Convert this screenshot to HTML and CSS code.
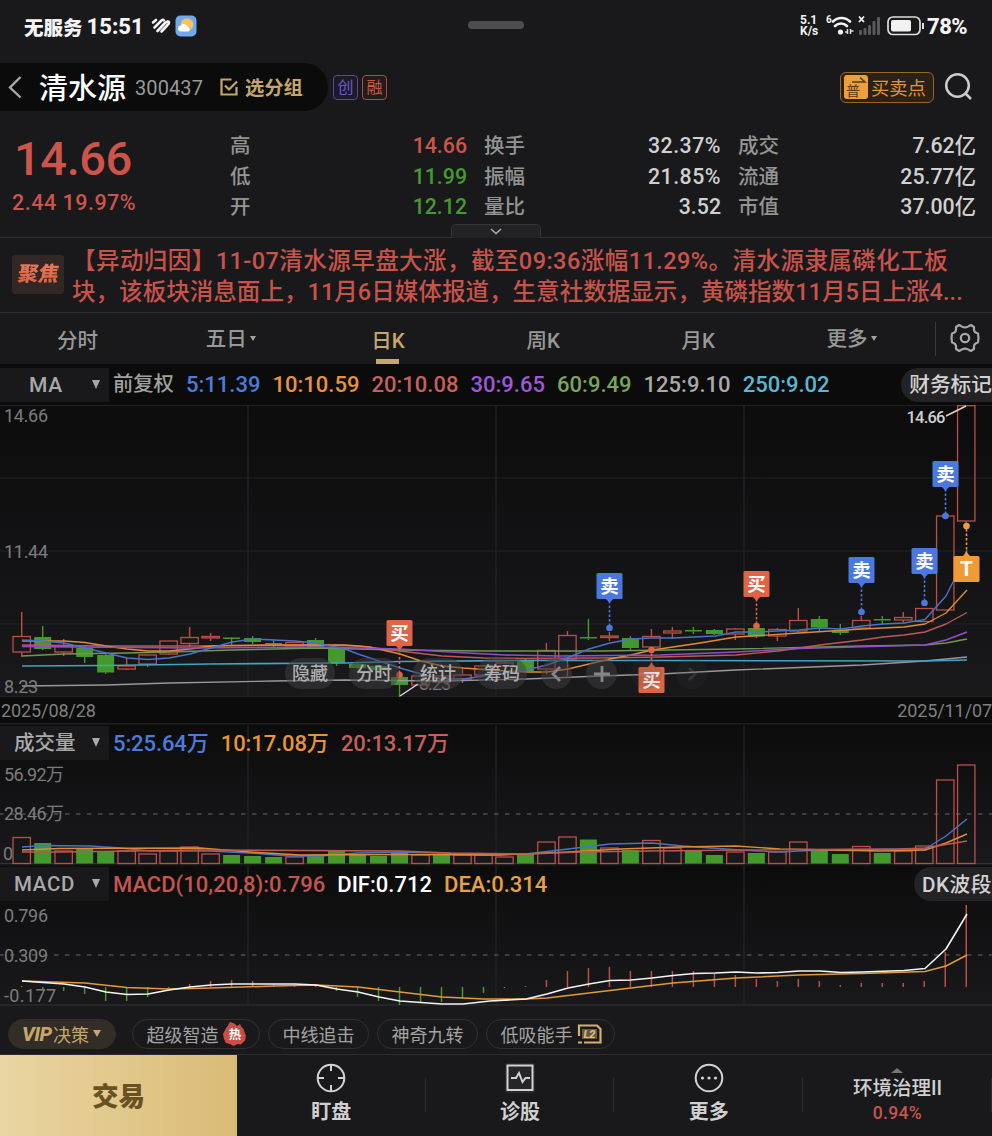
FILE: index.html
```html
<!DOCTYPE html>
<html lang="zh-CN">
<head>
<meta charset="utf-8">
<title>清水源 300437</title>
<link rel="stylesheet" href="styles.css">
</head>
<body>
<div class="app">
  <div class="status">
    <span class="carrier">无服务</span><span class="clock">15:51</span>
    <svg class="stripes" width="20" height="18" viewBox="0 0 20 18" fill="none" stroke="#f4f4f4" stroke-width="2.600" stroke-linecap="round" stroke-linejoin="round"><path d="M2 5.500L5 3"/><path d="M3.500 10.500L10.500 3.500Q12 2 13 3.500"/><path d="M6.500 14L13.500 6.500Q17.500 3 18 5.500Q18 7 16.500 8L10.500 14.500"/></svg>
    <svg class="weather" width="22" height="22" viewBox="0 0 22 22"><rect x=".5" y=".5" width="21" height="21" rx="5" fill="#70a9ee"/><circle cx="12" cy="9.500" r="6.300" fill="#f8c262"/><path d="M6 16.500a3 3 0 0 1 0-6 3.700 3.700 0 0 1 6.500 1.500 2.500 2.500 0 0 1 1 4.500z" fill="#fff"/></svg>
    <span class="notch"></span>
    <span class="speed"><b>5.1</b><b>K/s</b></span>
    <svg class="net" width="56" height="24" viewBox="0 0 56 24"><text x="0" y="9" class="tiny">6</text><g fill="none" stroke="#f4f4f4" stroke-width="2.600" stroke-linecap="round"><path d="M7 7.500a12 12 0 0 1 17 0"/><path d="M9 12a8.500 8.500 0 0 1 12 0"/></g><circle cx="14.500" cy="18" r="2.600" fill="#f4f4f4"/><path d="M21.500 15v5M24.500 15v5M19 18h2.500M24.500 17h3" stroke="#ddd" stroke-width="1.500"/><path d="M33 2.500l5 5.500M38 2.500l-5 5.500" stroke="#f4f4f4" stroke-width="1.800"/><g fill="#59595b"><rect x="33" y="16" width="3" height="5" rx="1"/><rect x="37.500" y="14" width="3" height="7" rx="1"/><rect x="42" y="11" width="3" height="10" rx="1"/><rect x="46.500" y="7" width="3" height="14" rx="1"/><rect x="51" y="3" width="3" height="18" rx="1"/></g></svg>
    <svg class="battery" width="38" height="20" viewBox="0 0 38 20"><rect x="1" y="1" width="32" height="17.500" rx="5" fill="none" stroke="#dedede" stroke-width="1.700"/><rect x="4" y="4" width="20" height="11.500" rx="2" fill="#f2f2f2"/><path d="M36 7v6" stroke="#dedede" stroke-width="2"/></svg>
    <span class="pct">78%</span>
  </div>

  <div class="title">
    <div class="pill">
      <svg width="14" height="24" viewBox="0 0 14 24" fill="none" stroke="#aaa" stroke-width="2.300"><path d="M12.500 2L2 12.500l10.500 10"/></svg>
      <span class="name">清水源</span><span class="code">300437</span>
      <svg class="check" width="20" height="20" viewBox="0 0 20 20" fill="none" stroke="#c5a66b" stroke-width="2.200"><path d="M12.500 2.500H2.500v15h15V10"/><path d="M6 8.500l4 4L18 4.500"/></svg>
      <span class="group">选分组</span>
    </div>
    <span class="tag violet">创</span><span class="tag rust">融</span>
    <div class="points"><span class="pu">普<svg width="16" height="8" viewBox="0 0 16 8" fill="none" stroke="#5b3a12" stroke-width="1.600"><path d="M1 6h13L9 1.500"/></svg></span><span>买卖点</span></div>
    <svg class="search" width="30" height="30" viewBox="0 0 30 30" fill="none" stroke="#ccc" stroke-width="2.500"><circle cx="13.500" cy="13.500" r="11.300"/><path d="M21.500 21.500l5.500 5.500"/></svg>
  </div>

  <div class="quote">
    <div class="price"><div class="last">14.66</div><div class="chg">2.44 19.97%</div></div>
    <dl class="stats">
      <dt>高</dt><dd class="r">14.66</dd><dt>换手</dt><dd class="w">32.37%</dd><dt>成交</dt><dd>7.62亿</dd>
      <dt>低</dt><dd class="g">11.99</dd><dt>振幅</dt><dd class="w">21.85%</dd><dt>流通</dt><dd>25.77亿</dd>
      <dt>开</dt><dd class="g">12.12</dd><dt>量比</dt><dd>3.52</dd><dt>市值</dt><dd>37.00亿</dd>
    </dl>
    <div class="expand"><svg width="12" height="7" viewBox="0 0 12 7" fill="none" stroke="#aaa" stroke-width="1.500"><path d="M1 1l5 4.500L11 1"/></svg></div>
  </div>

  <div class="news">
    <span class="focus"><i>聚焦</i></span>
    <div class="lines"><div class="l1">【异动归因】11-07清水源早盘大涨，截至09:36涨幅11.29%。清水源隶属磷化工板</div><div class="l2">块，该板块消息面上，11月6日媒体报道，生意社数据显示，黄磷指数11月5日上涨4...</div></div>
  </div>

  <div class="tabs">
    <span>分时</span><span class="up">五日<i></i></span><span class="on">日K</span><span>周K</span><span>月K</span><span class="up">更多<i></i></span>
    <div class="gear"><svg width="30" height="30" viewBox="0 0 30 30" fill="none" stroke="#a8a8a8" stroke-width="2.200" stroke-linejoin="round"><path d="M9.200 2L12 3.600Q15 5.200 18 3.600L20.800 2L24 4V6.500Q24 9.500 28 10.500L28.500 15L28 19.500Q24 20.500 24 23.500V26L20.800 28L18 26.400Q15 24.800 12 26.400L9.200 28L6 26V23.500Q6 20.500 2 19.500L1.500 15L2 10.500Q6 9.500 6 6.500V4Z"/><circle cx="15" cy="15" r="4.200"/></svg></div>
  </div>

  <div class="legend ma">
    <span class="pick"><em>MA</em><i></i></span>
    <span class="fq">前复权</span><span class="c-blue">5:11.39</span><span class="c-orange">10:10.59</span><span class="c-rose">20:10.08</span><span class="c-purple">30:9.65</span><span class="c-lime">60:9.49</span><span class="c-gray">125:9.10</span><span class="c-cyan">250:9.02</span>
    <span class="side">财务标记</span>
  </div>

  <div class="kline">
    <svg id="kline" width="992" height="292" viewBox="0 405 992 292"></svg>
    <div class="tools"><span>隐藏</span><span>分时</span><span>统计</span><span>筹码</span>
      <b><svg width="16" height="18" viewBox="0 0 16 18"><path d="M11 2L4 9l7 7"/></svg></b>
      <b><svg width="18" height="18" viewBox="0 0 18 18"><path d="M1 9h16M9 1v16"/></svg></b>
      <b class="faint"><svg width="18" height="18" viewBox="0 0 18 18"><path d="M1 9h16"/></svg></b>
      <b class="faint"><svg width="16" height="18" viewBox="0 0 16 18"><path d="M5 3l6 6-6 6"/></svg></b>
    </div>
  </div>
  <div class="dates"><span>2025/08/28</span><span>2025/11/07</span></div>

  <div class="panel vol">
    <svg id="volume" width="992" height="140" viewBox="0 725 992 140"></svg>
    <div class="legend"><span class="pick"><em>成交量</em><i></i></span><span class="c-blue">5:25.64万</span><span class="c-orange">10:17.08万</span><span class="c-rose">20:13.17万</span></div>
  </div>
  <div class="panel osc">
    <svg id="macd" width="992" height="140" viewBox="0 866 992 140"></svg>
    <div class="legend"><span class="pick"><em>MACD</em><i></i></span><span class="c-red">MACD(10,20,8):0.796</span><span class="c-white">DIF:0.712</span><span class="c-amber">DEA:0.314</span><span class="side dk">DK波段</span></div>
  </div>

  <div class="chips">
    <span class="chip vip"><em>VIP</em>决策<i></i></span>
    <span class="chip hot">超级智造<svg width="24" height="26" viewBox="0 0 24 26"><path d="M7 1q5 1 7 4l3-2q1 3 3.500 5l1 3.500 1.500 3-1 5-4 4-3.500-.500-4 2-3.500-2-4-1-2-4L0 13l2-4z" fill="#cb4d45"/><text x="12" y="18" class="badge">热</text></svg></span>
    <span class="chip plain">中线追击</span><span class="chip plain">神奇九转</span>
    <span class="chip low">低吸能手<svg width="25" height="20" viewBox="0 0 25 20"><path d="M2 12V1.500h18l3.500 3.500v13.500H7M1 18.500h4" fill="none" stroke="#d3b06c" stroke-width="2.200"/><rect x="5" y="5" width="15" height="10" fill="#655a47"/><text x="12.500" y="14" class="lv">L2</text></svg></span>
  </div>

  <div class="nav">
    <div class="trade">交易</div>
    <div class="item"><svg width="30" height="30" viewBox="0 0 30 30" fill="none" stroke="#d2d2d2" stroke-width="2"><circle cx="15" cy="15" r="13.300"/><path d="M15 2v6M15 22v6M2 15h6M22 15h6"/></svg><span>盯盘</span></div>
    <div class="item"><svg width="30" height="30" viewBox="0 0 30 30" fill="none" stroke="#d2d2d2" stroke-width="2"><rect width="30" height="30" fill="#242628" stroke="none"/><rect x="2.500" y="2.500" width="25" height="24.500"/><path d="M6 15h5l3-5 3.500 9 3-4H25"/></svg><span>诊股</span></div>
    <div class="item"><svg width="30" height="30" viewBox="0 0 30 30" fill="none" stroke="#d2d2d2" stroke-width="2"><circle cx="15" cy="15" r="13.300"/><g fill="#d2d2d2" stroke="none"><circle cx="8.500" cy="15" r="1.600"/><circle cx="15" cy="15" r="1.600"/><circle cx="21.500" cy="15" r="1.600"/></g></svg><span>更多</span></div>
    <div class="item sector"><i></i><strong>环境治理II</strong><small>0.94%</small></div>
  </div>
</div>
<script src="chart.js"></script>
</body>
</html>
```

FILE: styles.css
```css
* { box-sizing: border-box; }
body { margin: 0; background: #19191b; color: #d0d0d0; font-family: Roboto, "Noto Sans CJK SC", sans-serif; }
i, em { font-style: normal; }
svg { display: block; flex: none; }
.app { width: 992px; height: 1136px; overflow: hidden; display: flex; flex-direction: column; white-space: nowrap; background: #19191b; }
.app > div { flex: none; }

.status { height: 63px; display: flex; align-items: center; padding: 0 24px 11px; color: #f4f4f4; position: relative; }
.carrier { font-size: 19.5px; font-weight: 900; }
.clock { font-size: 22px; font-weight: 800; margin-left: 4px; letter-spacing: 0; width: 60px; }
.stripes { margin-left: 4px; }
.weather { margin-left: 4px; }
.notch { position: absolute; left: 468px; top: 21px; width: 56px; height: 8px; border-radius: 4px; background: #4d4d4f; }
.speed { margin-left: auto; width: 22px; display: flex; flex-direction: column; font-size: 12px; line-height: 11px; }
.net { margin-left: 4px; }
.tiny { font: 700 10px Roboto, sans-serif; fill: #f4f4f4; }
.battery { margin-left: 5px; }
.pct { font-size: 22px; font-weight: 800; letter-spacing: -.5px; margin-left: 2px; width: 41px; }

.title { height: 48px; display: flex; align-items: center; }
.pill { width: 328px; height: 48px; background: #0b0b0b; border-radius: 0 24px 24px 0; display: flex; align-items: center; padding-left: 8px; }
.name { font-size: 29px; font-weight: 500; color: #fff; margin-left: 17px; width: 96px; line-height: 40px; padding-top: 3px; }
.code { font-size: 20px; color: #999; width: 84px; letter-spacing: .1px; padding-top: 1px; }
.group { font-size: 19.300px; font-weight: 700; color: #c5a66b; margin-left: 6px; }
.tag { width: 25px; height: 25px; margin-left: 5px; border: 1px solid; border-radius: 4px; font-size: 16px; line-height: 24px; text-align: center; }
.tag + .tag { margin-left: 4px; }
.violet { color: #7059c2; border-color: #5a4a9c; background: #1c1a26; }
.rust { color: #c95a42; border-color: #a84f3c; background: #241a19; }
.points { margin-left: auto; width: 94px; height: 31px; border: 1px solid #9a6425; border-radius: 6px; background: #2b2217; display: flex; align-items: center; gap: 3px; padding-left: 3px; font-size: 18.300px; color: #e0933a; }
.pu { width: 24px; height: 24px; border-radius: 3px; background: #ef9f3a; color: #5b3a12; font-size: 14px; line-height: 32px; padding-left: 2px; position: relative; }
.pu svg { position: absolute; left: 7px; top: 1px; }
.search { margin: 0 18px 0 10px; }

.quote { height: 127px; display: flex; border-bottom: 1px solid #303032; position: relative; padding-top: 20px; }
.price { width: 230px; padding-left: 12px; color: #cd544b; }
.last { font-size: 47px; font-weight: 500; line-height: 56px; padding-left: 2px; letter-spacing: -.4px; }
.chg { font-size: 21.500px; font-weight: 500; line-height: 31px; letter-spacing: .5px; }
.stats { margin: 0; width: 746px; display: grid; grid-template-columns: 100px 137px 117px 137px 117px 138px; grid-auto-rows: 30.500px; font-size: 21.300px; line-height: 30.500px; }
.stats dt { font-size: 20.500px; font-weight: 500; color: #949494; padding-left: 0; line-height: 31.500px; }
.stats dt:nth-of-type(3n+2), .stats dt:nth-of-type(3n) { padding-left: 17px; }
.stats dd { margin: 0; text-align: right; font-weight: 500; letter-spacing: 0; }
.stats .w { letter-spacing: .5px; }
.stats .r { color: #cd544b; }
.stats .g { color: #459a2d; }
.expand { position: absolute; left: 451px; top: 113px; width: 90px; height: 14px; border: 1px solid #343436; border-bottom: 0; border-radius: 5px 5px 0 0; background: #222224; display: flex; justify-content: center; padding-top: 3px; }

.news { height: 75px; border-bottom: 1px solid #2c2c2e; display: flex; color: #c8534b; }
.focus { margin: 17px 8px 0 12px; width: 52px; height: 39px; border-radius: 3px; background: #322725; color: #e26447; font-size: 20.500px; font-weight: 900; line-height: 38px; text-align: center; }
.focus i { display: inline-block; transform: skewX(-10deg); background: linear-gradient(#e9866c, #df5432); background-clip: text; color: transparent; }
.lines { padding-top: 8px; font-size: 23.500px; font-weight: 500; line-height: 31px; }
.l1 { letter-spacing: .45px; }
.l2 { letter-spacing: .05px; }

.tabs { height: 51px; display: flex; font-size: 20.500px; font-weight: 500; color: #989898; }
.tabs > span { width: 155.200px; text-align: center; line-height: 57px; position: relative; }
.tabs .up { line-height: 53px; left: -2px; }
.tabs i { display: inline-block; border: 3.500px solid transparent; border-top: 5px solid #a0a0a0; border-bottom: 0; margin-left: 3px; vertical-align: 5px; }
.tabs .on { color: #c8a76a; font-weight: 500; }
.tabs .on::after { content: ""; position: absolute; left: 66px; bottom: 0; width: 23px; height: 5px; background: #c8a76a; }
.gear { margin: 9px 0 0 4px; height: 34px; border-left: 1px solid #3a3a3c; padding: 1px 0 0 14px; }

.legend { height: 35px; display: flex; align-items: center; font-size: 22px; font-weight: 500; }
.ma { height: 41px; background: #0b0b0b; }
.legend > span { margin-right: 12.100px; line-height: 35px; }
.legend .pick { width: 109px; height: 34px; background: #19191b; color: #a9a9a9; display: flex; align-items: center; justify-content: space-between; padding: 0 9px 0 14px; margin-right: 4px; }
.pick em { font-size: 20.500px; letter-spacing: .7px; }
.vol .pick em { letter-spacing: 0; }
.panel .pick em { padding-top: 2px; }
.ma .pick em { padding-left: 15px; font-size: 21px; padding-top: 1px; }
.pick i { border: 4.500px solid transparent; border-top: 9px solid #a9a9a9; border-bottom: 0; }
.legend .fq { color: #a0a0a0; font-size: 20.300px; font-weight: 500; }
.vol .legend > span:not(.pick), .osc .legend > span:not(.pick) { padding-top: 1px; }
.vol .c-blue, .vol .c-orange, .vol .c-rose { letter-spacing: -.1px; }
.legend .side { margin: 0 0 0 auto; height: 34px; background: #232325; border-radius: 17px 0 0 17px; padding-left: 8px; font-size: 20.700px; font-weight: 500; color: #d2d2d2; }
.legend .dk { letter-spacing: .5px; }
.c-blue { color: #4c7cdb; } .c-orange { color: #e8933c; } .c-rose { color: #c5605d; }
.c-purple { color: #9b59d9; } .c-lime { color: #7aa55a; } .c-gray { color: #a9a9a9; }
.c-cyan { color: #5cb6d4; } .c-red { color: #c5554f; } .c-white { color: #fff; } .c-amber { color: #e8a040; }

.kline { height: 292px; position: relative; background: linear-gradient(#0c0c0d, #19191b); }
.tools { position: absolute; left: 285px; top: 253px; display: flex; gap: 14px; }
.tools span { width: 50px; height: 31px; border-radius: 16px; background: rgba(64,64,66,.5); color: #b0b0b0; font-size: 18px; font-weight: 500; line-height: 32px; text-align: center; }
.tools b { width: 31px; height: 31px; border-radius: 50%; background: rgba(64,64,66,.5); display: flex; align-items: center; justify-content: center; }
.tools path { fill: none; stroke: #868688; stroke-width: 2.800; }
.tools .faint { background: rgba(60,60,62,.4); opacity: .4; }
.tools .faint:last-child path { stroke: #5c5c5e; }
.dates { height: 27px; background: #0b0b0b; display: flex; justify-content: space-between; align-items: center; padding: 0 0 0 1px; font-size: 18px; letter-spacing: -.1px; color: #808080; border-bottom: 1px solid #202022; }

.panel { display: grid; background: linear-gradient(#0c0c0d, #19191b); }
.panel > * { grid-area: 1 / 1; }
.vol { height: 141px; border-top: 1px solid #141416; }
.osc { height: 141px; border-top: 1px solid #141416; }

#kline text, #volume text, #macd text { font: 18px Roboto, "Noto Sans CJK SC", sans-serif; fill: #7c7c7e; }
#kline .flag { font: 700 18.500px "Noto Sans CJK SC", sans-serif; fill: #fff; text-anchor: middle; }
#kline .t { font: 700 20px Inter, sans-serif; fill: #fff; text-anchor: middle; }
#kline .high { font-size: 16.500px; font-weight: 500; fill: #d0d0d0; }

.chips { height: 49px; border-bottom: 1px solid #2c2c2e; display: flex; align-items: center; gap: 8px; padding: 7px 0 0 8px; font-size: 18px; color: #a3a3a3; }
.chip { height: 30px; border: 1px solid #303032; border-radius: 15px; display: flex; align-items: center; padding-left: 13.500px; }
.vip { width: 108px; background: #322d27; border-color: #322d27; color: #c5a66b; margin-right: 8px; padding-left: 13px; }
.vip em { font-style: italic; font-weight: 800; font-size: 20px; width: 31px; letter-spacing: -.5px; }
.vip i { border: 4px solid transparent; border-top: 7px solid #c5a66b; border-bottom: 0; margin-left: 4px; }
.hot { width: 128px; } .hot svg { margin-left: 4px; }
.plain { width: 101px; }
.low { width: 129px; } .low svg { margin-left: 4px; }
.badge { font: 700 12.500px "Noto Sans CJK SC", sans-serif; fill: #fff; text-anchor: middle; }
.lv { font: italic 800 11px Roboto, sans-serif; fill: #e1bd74; text-anchor: middle; }

.nav { height: 81px; display: flex; }
.trade { width: 237px; background: linear-gradient(90deg, #e9d5a2, #dabb76); color: #695221; font-size: 26.500px; font-weight: 900; text-align: center; line-height: 83px; }
.item { width: 188.700px; display: flex; flex-direction: column; align-items: center; padding-top: 8px; font-size: 20px; font-weight: 700; position: relative; }
.item span { line-height: 30px; margin-top: 4px; }
.item::after { content: ""; position: absolute; right: 0; top: 23px; width: 1px; height: 34px; background: #2d2d2f; }
.item.sector { padding-top: 13px; }
.sector i { border: 6px solid transparent; border-bottom: 5px solid #777; border-top: 0; }
.sector strong { font-size: 19.500px; font-weight: 500; line-height: 32px; }
.sector small { font-size: 17.500px; font-weight: 500; line-height: 16px; color: #c5554f; letter-spacing: .3px; }
```

FILE: chart.js
```js
const RED = '#bb4f48', GREEN = '#43992b', GRID = '#222224';
const cx = i => 21.7 + 20.99 * i;
const line = (pts, color, w = 1.4) => {
  const p = pts.split(' ').map(s => s.split(',').map(Number));
  let d = `M${p[0]}`;
  for (let i = 1; i < p.length; i++) d += `L${p[i]}`;
  return `<path d="${d}" fill="none" stroke="${color}" stroke-width="${w}" stroke-linejoin="round"/>`;
};
const seg = (x1, y1, x2, y2, color, extra = '') =>
  `<line x1="${x1}" y1="${y1}" x2="${x2}" y2="${y2}" stroke="${color}" ${extra}/>`;
const cols = (a, b) => [248, 496, 744].map(x => seg(x, a, x, b, GRID, 'stroke-width="1.500"')).join('');
const label = (x, y, s, w) => `<text x="${x}" y="${y}" textLength="${w}">${s}</text>`;
const box = (i, up, a, b) => up
  ? `<rect x="${cx(i) - 8.700}" y="${a}" width="17.400" height="${Math.max(b - a, 1)}" fill="none" stroke="${RED}" stroke-width="1.300"/>`
  : `<rect x="${cx(i) - 8.500}" y="${a}" width="17" height="${Math.max(b - a, 1.500)}" fill="${GREEN}"/>`;

// up flag, high, body top, body bottom, low
const candles = [
  [1,612,636.5,652,657],[0,626,637,649,650],[1,639,646.5,652,656],[0,646,648,657,663],[0,653,655,672.5,674],
  [1,658,666,669,670],[1,655,655,664,667],[1,641,641,654,655],[1,627,637.5,643.5,647],[1,633,636.5,638,641],
  [0,637,637.5,639,646],[0,636,638,642,644],[0,639,643,644,648],[1,642,642.5,647,647],[0,638,640,647,648],
  [0,647,647,663,666],[0,662,664,668,669],[0,665,666,670,671],[0,673,677,685,697],[1,674,676,685,686],
  [1,675,676,682,683],[1,667,675,679,683],[1,665,666,675,676],[1,662,663,666,667],[0,659,660,671,672],
  [1,643,650.5,669,674],[1,631,635.5,659,676],[0,619,637,638.5,640],[1,632,636,637.5,641],[0,636,638,648,650],
  [1,629,636.5,647,653],[1,627,631,633,639],[0,627,630,631.5,634],[0,629,630,634,635],[1,628,629,634,640],
  [0,627,628,636.5,638],[1,628,629.5,636,641],[1,608,620.5,631,632],[0,616,619,627.5,631],[0,624,630,633,635],
  [1,616,620.5,628,629],[0,616,619,620.5,624],[1,612,617.5,620,623],[1,608,608.5,621.5,622],[1,516,516,610,610],[1,405,405.7,521,526]
];
let k = [405.5, 478, 551, 624, 696.5].map(y => seg(0, y, 992, y, GRID)).join('') + cols(405, 697);
candles.forEach(([up, h, a, b, l], i) => {
  const c = up ? RED : GREEN;
  k += seg(cx(i), h, cx(i), a, c, 'stroke-width="1.400"') + seg(cx(i), b, cx(i), l, c, 'stroke-width="1.400"') + box(i, up, a, b);
});
k += line('22,686 106,685 169,683 274,681 345,680 442,681 526,679 600,676 660,674 736,670 862,665 925,661 946,659 967,657', '#989898');
k += line('22,666 106,665.5 210,664 345,663 400,661.5 526,660.5 660,660.5 925,661 967,660', '#42a4c2', 1.6);
k += line('22,656 64,654 127,653 169,652 232,650 316,648 400,650 484,651 600,651 736,649 862,646 925,645 946,643 967,639', '#6e9851');
k += line('22,645 106,646 190,646 316,645 358,646 400,651 442,656 484,658 526,658.5 600,658 660,657 736,655 778,651 820,645 862,640 883,637 904,635 925,632 946,624 967,612.5', '#bc5954');
k += line('22,641 64,641 85,642.5 106,646 127,649 148,651 169,651 190,649 211,646 232,645.5 274,645 345,645 370,647 400,654 421,661 442,666 463,668 505,671 526,672 547,672 568,669 589,664 610,659 631,655 652,650 673,647 700,643 736,637 799,633 862,629 904,627 925,624 946,613 967,590', '#df8b35');
k += line('22,646.5 190,648 316,647 400,649 450,652 505,655 560,656 660,655 736,652 799,648.5 925,645 946,640 967,632', '#904fc8', 1.6);
k += line('22,640 43,641 64,643 85,648 106,653 127,658 148,659.5 169,658 190,654 211,648 232,642 253,639 274,640 295,641 316,643 345,649 358,654 379,661 400,668 421,674 442,679 463,679 484,676 505,673 526,670 547,665 568,657.5 589,649 610,643 631,639 652,638 673,638 715,636 736,632 757,632 799,630 820,628 841,629 862,626 883,624 904,623 925,619.5 946,596 954,580 967,550', '#4873c9');
k += label(4, 422, '14.66', 44) + label(4, 558, '11.44', 44) + label(4, 693, '8.23', 34) + label(419, 690, '8.23', 32);
k += seg(400, 696, 418, 684, '#d8d8d8', 'stroke-width="1.500"') + seg(946, 416, 966, 406, '#d8d8d8', 'stroke-width="1.500"');
k += '<text class="high" x="906.500" y="423" textLength="39">14.66</text>';
[[609.5,586,'卖','#4a78df',628],[756.5,584,'买','#dc6546',626],[861.5,570,'卖','#4a78df',612],[924.5,561,'卖','#4a78df',603],
 [945.5,474,'卖','#4a78df',516],[966.5,569,'T','#ef9c37',526],[399.5,633,'买','#dc6546',675],[651.5,680,'买','#dc6546',650]
].forEach(([x, y, s, c, dot]) => {
  const d = dot > y ? 1 : -1;
  k += seg(x, y + 15 * d, x, dot, c, 'stroke-width="1.600" stroke-dasharray="2.500 2"')
    + `<circle cx="${x}" cy="${dot}" r="3.300" fill="${c}"/><rect x="${x - 13}" y="${y - 13}" width="26" height="26" rx="1.500" fill="${c}"/>`
    + `<path d="M${x - 4} ${y + 12.500 * d}h8l-4 ${4.500 * d}z" fill="${c}"/><text class="${s === 'T' ? 't' : 'flag'}" x="${x}" y="${y + 7}">${s}</text>`;
});
document.getElementById('kline').innerHTML = k;

const volumes = [
  [1,837.5],[0,843],[1,851],[0,849],[0,852],[1,851],[1,854],[1,851],[1,847],[1,854],[0,855],[0,856],[0,857],[1,857],[0,855],[0,851],
  [0,854],[0,856],[0,852],[1,855],[0,855],[1,855],[1,855],[1,857],[0,854],[1,842],[1,837],[0,839.5],[1,848],[0,850],[1,840.5],
  [1,848],[0,851],[0,855],[1,852],[0,853],[1,852],[1,842],[0,850],[0,854],[1,846.5],[0,853],[1,851],[1,846],[1,780],[1,765]
];
const dash = y => seg(-1, y, 992, y, '#4c4c4e', 'stroke-width="1.500" stroke-dasharray="4.500 6.500"');
let v = cols(725, 864) + dash(814) + seg(0, 863.5, 992, 863.5, '#333335');
volumes.forEach(([up, y], i) => { v += box(i, up, y, 863.5); });
v += line('22,847 43,845.5 90,846 120,848 150,851 211,851 250,853 290,856 320,856 358,853 400,852 442,853 484,855 526,854 568,849 610,844 652,843 683,846 740,850 778,852 820,850 904,849 925,849 946,836 967,819', '#4873c9');
v += line('22,850 60,848.5 200,848 250,852 300,855 400,854.5 500,855 568,852 620,849 680,847 736,846 780,849 883,851 925,850 946,843 967,834', '#df8b35');
v += line('22,852 60,852 200,850 400,851 450,853 530,854 580,852 650,851 800,849.5 900,849 925,848 967,841', '#bc5954');
v += label(4, 781, '56.92万', 60) + label(4, 820, '28.46万', 60) + '<text x="3" y="860">0</text>';
document.getElementById('volume').innerHTML = v;

const bars = [986,989,991,994,1001,1001,997,988,984,981,980,981,984,985,986,991,997,1001,1005,1002,1002,998,993,988,986,
  980,971,968,967,971,971,971,971,973,975,979,981,979,981,985,983,983,983,981,952,905];
let m = cols(866, 1005) + dash(955) + seg(0, 1005, 992, 1005, '#333335');
bars.forEach((y, i) => { m += seg(cx(i), 987, cx(i), y, y < 987 ? RED : GREEN, 'stroke-width="1.500"'); });
m += line('22,981 85,983 127,987.5 169,989 211,988 274,986 316,985 358,987 400,992 442,997 484,999 526,999 547,998 589,993 631,988 673,983 736,978 799,975 862,973.5 925,971.5 946,966 967,955', '#e09a38', 1.5);
m += line('22,981 64,984 85,987 106,992 127,994.5 148,994 169,990 190,987 211,985 232,984 295,984 316,985 337,989 358,992 379,997 400,1001 442,1004 463,1004 490,1001 526,999 547,994 568,988 589,984 610,980.5 631,980 652,978 673,975.5 694,973.5 715,973 736,972 757,973 778,972.5 799,971 820,971 841,972.5 862,972 904,970.5 925,968.5 946,949 967,914', '#f4f4f4', 1.6);
m += label(4, 922, '0.796', 44) + label(4, 962, '0.309', 44) + label(4, 1002, '-0.177', 52);
document.getElementById('macd').innerHTML = m;
```
